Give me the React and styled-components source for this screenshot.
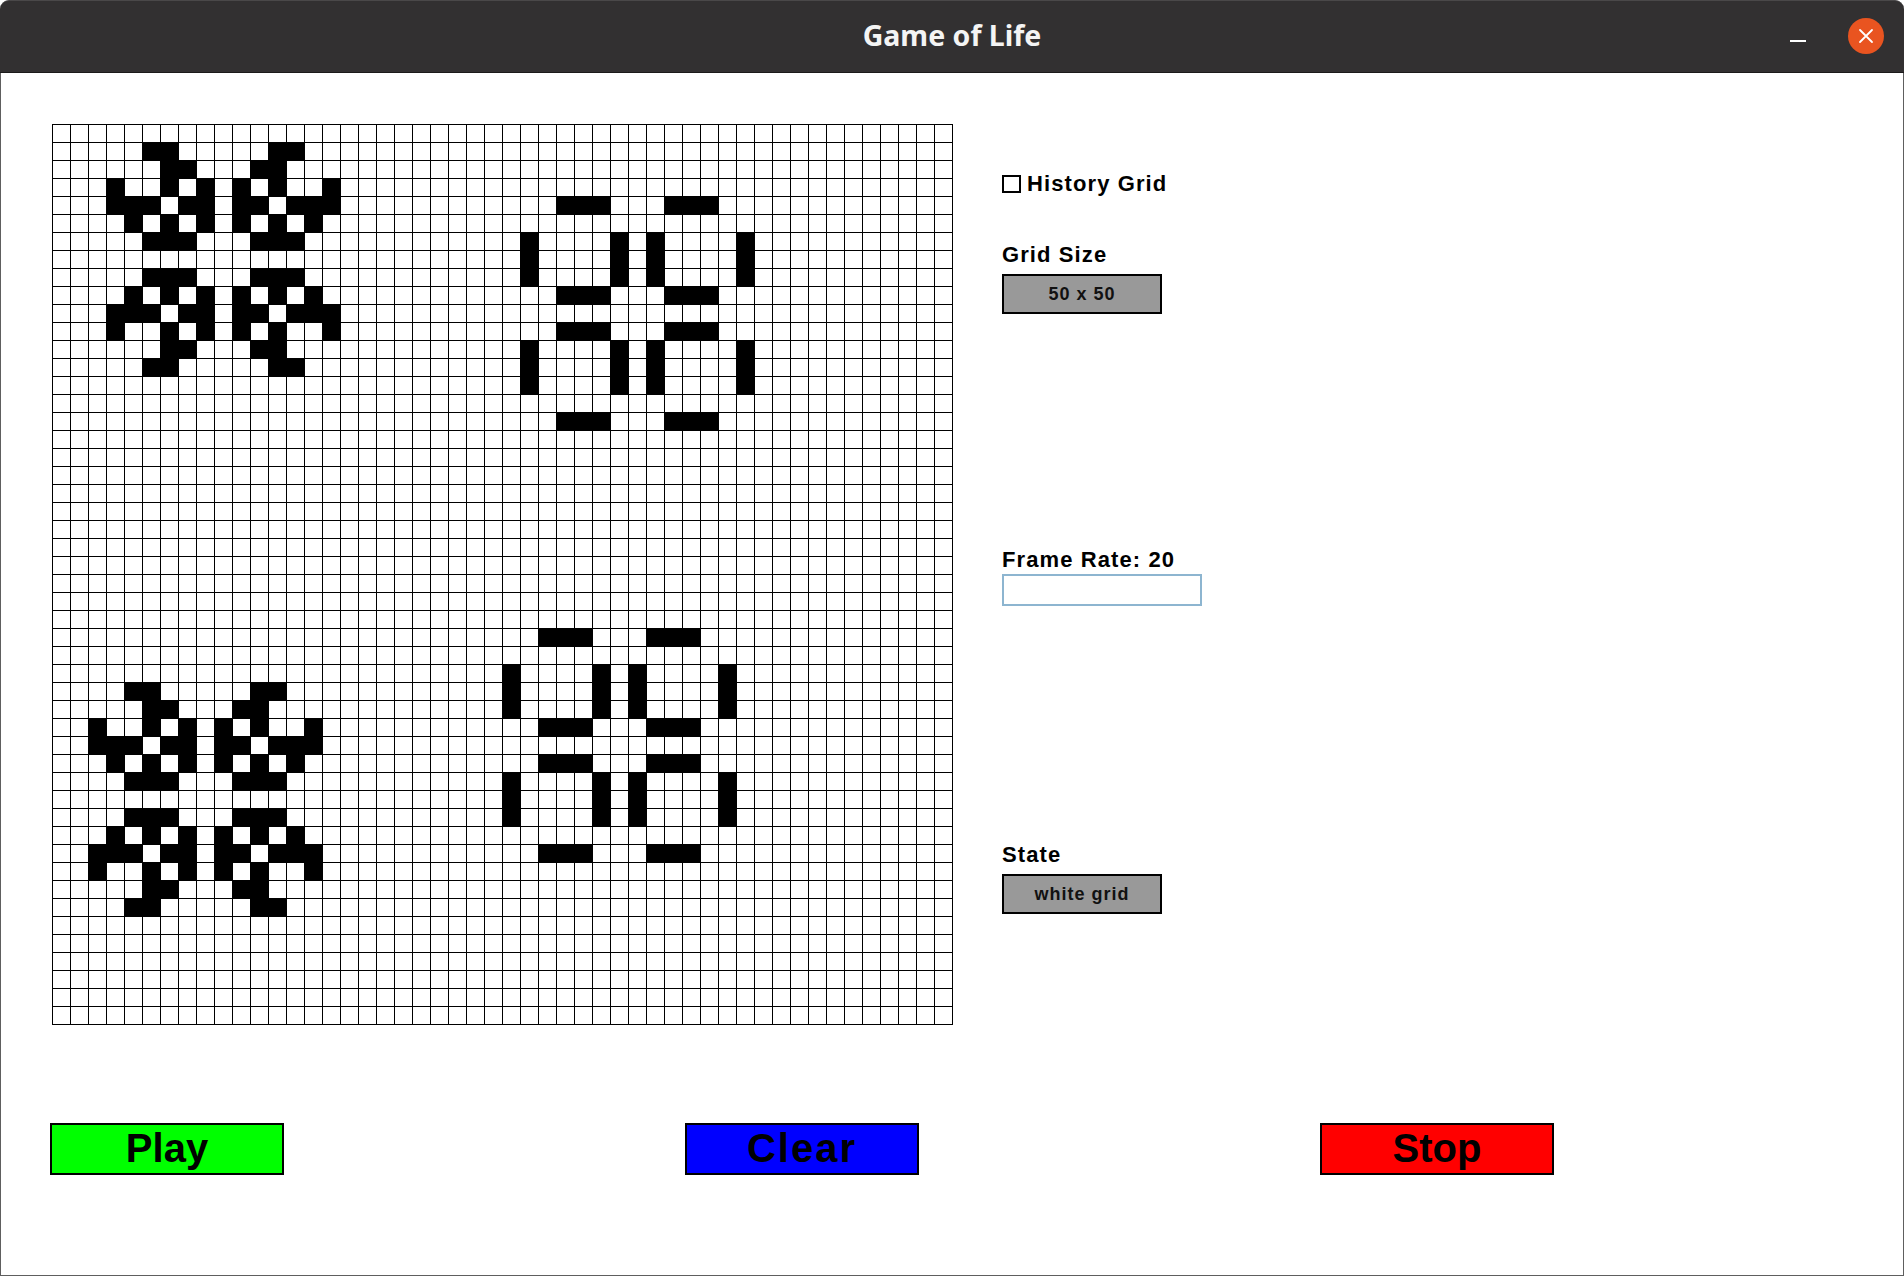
import React from 'react';
import styled, { createGlobalStyle } from 'styled-components';

const GlobalStyle = createGlobalStyle`
  html, body { margin: 0; padding: 0; background: #ffffff; }
  body { font-family: "Liberation Sans", Arial, sans-serif; }
  * { box-sizing: border-box; }
`;

const N = 50;
const PAT_A = [
  [2, 3, 9, 10],
  [3, 4, 8, 9],
  [0, 3, 5, 7, 9, 12],
  [0, 1, 2, 4, 5, 7, 8, 10, 11, 12],
  [1, 3, 5, 7, 9, 11],
  [2, 3, 4, 8, 9, 10],
  [],
  [2, 3, 4, 8, 9, 10],
  [1, 3, 5, 7, 9, 11],
  [0, 1, 2, 4, 5, 7, 8, 10, 11, 12],
  [0, 3, 5, 7, 9, 12],
  [3, 4, 8, 9],
  [2, 3, 9, 10],
];
const BARS = [2, 3, 4, 8, 9, 10];
const POSTS = [0, 5, 7, 12];
const PULSAR = [BARS, [], POSTS, POSTS, POSTS, BARS, [], BARS, POSTS, POSTS, POSTS, [], BARS];

const alive = new Set();
const place = (pat, r0, c0) => {
  pat.forEach((cols, r) => cols.forEach((c) => alive.add((r0 + r) * N + (c0 + c))));
};
place(PAT_A, 1, 3);
place(PAT_A, 31, 2);
place(PULSAR, 4, 26);
place(PULSAR, 28, 25);

const Window = styled.div`
  width: 1904px;
  height: 1276px;
  display: flex;
  flex-direction: column;
  overflow: hidden;
  background: #ffffff;
`;

const TitleBar = styled.header`
  height: 73px;
  flex: none;
  background: #323031;
  border-top: 1px solid #4a4849;
  border-bottom: 1px solid #1b1a1a;
  border-radius: 9px 9px 0 0;
  display: grid;
  grid-template-columns: 1fr auto 1fr;
  align-items: center;
`;

const Title = styled.h1`
  grid-column: 2;
  margin: 0;
  color: #f4f4f4;
  font-family: "Noto Sans", "DejaVu Sans", sans-serif;
  font-weight: 700;
  font-size: 28.5px;
  line-height: 1;
  padding-bottom: 2px;
`;

const WinControls = styled.div`
  grid-column: 3;
  justify-self: end;
  display: flex;
  align-items: center;
  gap: 42px;
  padding-right: 20px;
  padding-bottom: 2px;
`;

const MinimizeBtn = styled.div`
  width: 16px;
  height: 2px;
  background: #ffffff;
  margin-top: 10px;
`;

const CloseBtn = styled.div`
  width: 36px;
  height: 36px;
  border-radius: 50%;
  background: #e95420;
  display: flex;
  align-items: center;
  justify-content: center;
`;

const Body = styled.main`
  flex: 1;
  border: 1px solid #5e5e5e;
  border-top: none;
  padding: 51px 0 0 49px;
  display: flex;
  flex-direction: column;
`;

const MainRow = styled.div`
  display: flex;
  align-items: flex-start;
  gap: 49px;
  padding-left: 2px;
`;

const Board = styled.div`
  display: grid;
  grid-template-columns: repeat(${N}, 17px);
  grid-auto-rows: 17px;
  gap: 1px;
  padding: 1px;
  background: #000000;
  width: 901px;
`;

const Cell = styled.div`
  background: ${(p) => (p.$on ? '#000000' : '#ffffff')};
`;

const Panel = styled.aside`
  display: flex;
  flex-direction: column;
  align-items: flex-start;
`;

const CheckRow = styled.label`
  display: flex;
  align-items: center;
  gap: 6px;
  margin-top: 47px;
  height: 26px;
`;

const CheckBox = styled.span`
  width: 19px;
  height: 18px;
  border: 2px solid #000000;
  background: #ffffff;
`;

const Label = styled.div`
  font-size: 22px;
  font-weight: 700;
  line-height: 26px;
  letter-spacing: 1.1px;
  color: #000000;
  margin-top: ${(p) => p.$mt}px;
`;

const ValueBox = styled.div`
  width: 160px;
  height: 40px;
  margin-top: 6px;
  border: 2px solid #000000;
  background: #999999;
  display: flex;
  align-items: center;
  justify-content: center;
  font-size: 18px;
  font-weight: 700;
  letter-spacing: 1px;
  color: #111111;
`;

const RateInput = styled.input`
  width: 200px;
  height: 32px;
  margin-top: 1px;
  border: 2px solid #8db5d0;
  background: #ffffff;
  outline: none;
  padding: 0 4px;
`;

const ButtonRow = styled.div`
  display: flex;
  gap: 401px;
  margin-top: 98px;
`;

const ActionButton = styled.button`
  width: 234px;
  height: 52px;
  border: 2px solid #000000;
  background: ${(p) => p.$bg};
  color: #000000;
  font-family: "Liberation Sans", Arial, sans-serif;
  font-weight: 700;
  font-size: 40px;
  letter-spacing: ${(p) => p.$ls || 0}px;
  padding: 0 0 2px;
  display: flex;
  align-items: center;
  justify-content: center;
  line-height: 1;
`;

export default function App() {
  const cells = [];
  for (let i = 0; i < N * N; i++) cells.push(<Cell key={i} $on={alive.has(i)} />);
  return (
    <>
      <GlobalStyle />
      <Window>
        <TitleBar>
          <Title>Game of Life</Title>
          <WinControls>
            <MinimizeBtn />
            <CloseBtn>
              <svg width="16" height="16" viewBox="0 0 16 16">
                <path d="M2 2 L14 14 M14 2 L2 14" stroke="#ffffff" strokeWidth="1.8" strokeLinecap="round" />
              </svg>
            </CloseBtn>
          </WinControls>
        </TitleBar>
        <Body>
          <MainRow>
            <Board>{cells}</Board>
            <Panel>
              <CheckRow>
                <CheckBox />
                <Label $mt={0}>History Grid</Label>
              </CheckRow>
              <Label $mt={45}>Grid Size</Label>
              <ValueBox>50 x 50</ValueBox>
              <Label $mt={233}>Frame Rate: 20</Label>
              <RateInput type="text" />
              <Label $mt={236}>State</Label>
              <ValueBox>white grid</ValueBox>
            </Panel>
          </MainRow>
          <ButtonRow>
            <ActionButton $bg="#00ff00">Play</ActionButton>
            <ActionButton $bg="#0000ff" $ls={2}>Clear</ActionButton>
            <ActionButton $bg="#ff0000">Stop</ActionButton>
          </ButtonRow>
        </Body>
      </Window>
    </>
  );
}
